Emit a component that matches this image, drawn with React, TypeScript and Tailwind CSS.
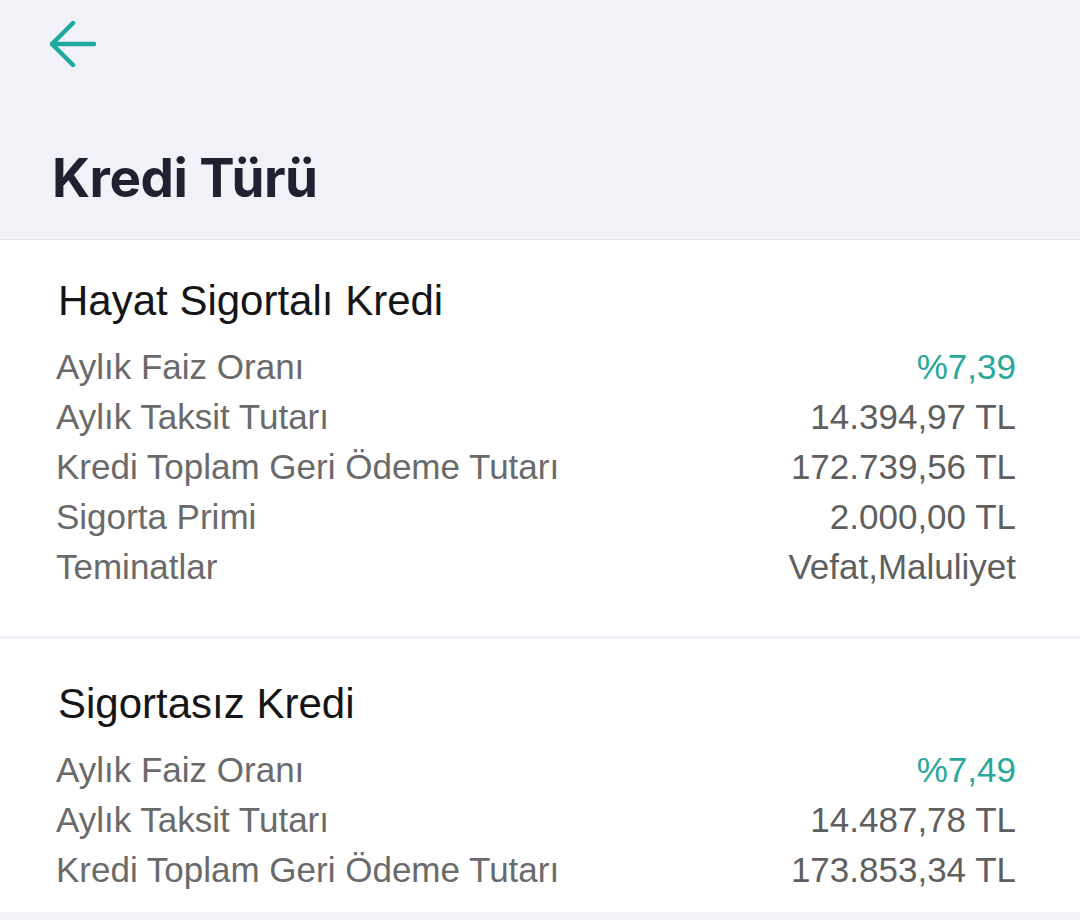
const sections = [
  {
    title: 'Hayat Sigortalı Kredi',
    rows: [
      { label: 'Aylık Faiz Oranı', value: '%7,39', accent: true },
      { label: 'Aylık Taksit Tutarı', value: '14.394,97 TL' },
      { label: 'Kredi Toplam Geri Ödeme Tutarı', value: '172.739,56 TL' },
      { label: 'Sigorta Primi', value: '2.000,00 TL' },
      { label: 'Teminatlar', value: 'Vefat,Maluliyet' },
    ],
  },
  {
    title: 'Sigortasız Kredi',
    rows: [
      { label: 'Aylık Faiz Oranı', value: '%7,49', accent: true },
      { label: 'Aylık Taksit Tutarı', value: '14.487,78 TL' },
      { label: 'Kredi Toplam Geri Ödeme Tutarı', value: '173.853,34 TL' },
    ],
  },
];

export default function App() {
  return (
    <div className="w-[1080px] h-[920px] bg-[#f1f2f7] overflow-hidden font-['Liberation_Sans',Arial,sans-serif]">
      {/* Header */}
      <div className="h-[240px] border-b border-[#e4e5ea] pl-[50px] pt-[21px]">
        <button className="block">
          <svg width="46" height="46" viewBox="0 0 46 46" fill="none" stroke="#1fa89e" strokeWidth="4.5" strokeLinecap="round" strokeLinejoin="round">
            <path d="M2 23H44" />
            <path d="M23 2L2 23L23 44" />
          </svg>
        </button>
        <h1 className="mt-[81px] ml-[2px] text-[53px] leading-[60px] font-bold text-[#1e2130] font-['Inter',sans-serif] tracking-[-0.5px]">
          Kredi Türü
        </h1>
      </div>

      {sections.map((s, i) => (
        <div
          key={s.title}
          className={`bg-white px-[56px] ${i === 0 ? 'pt-[36px] pb-[44px] mb-[3px]' : 'pt-[40px] pb-[17px]'}`}
        >
          <h2 className="text-[42px] leading-[50px] text-[#151515] ml-[2px]">{s.title}</h2>
          <div className="mt-[16px]">
            {s.rows.map(r => (
              <div key={r.label} className="flex justify-between items-center h-[50px] text-[35px] leading-[50px]">
                <span className="text-[#6a6a6a]">{r.label}</span>
                <span className={`mr-[8px] ${r.accent ? 'text-[#2aa89b]' : 'text-[#5f5f5f]'}`}>{r.value}</span>
              </div>
            ))}
          </div>
        </div>
      ))}
    </div>
  );
}
